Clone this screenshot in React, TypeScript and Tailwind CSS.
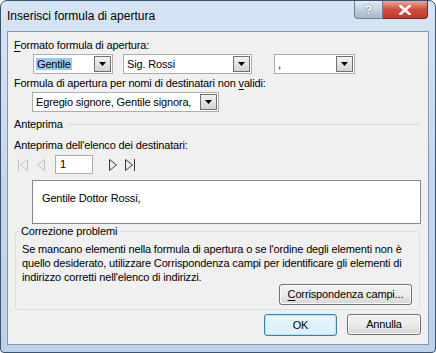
import React from "react";

const font = { fontFamily: '"Liberation Sans", Arial, sans-serif' };

function Arrow() {
  return (
    <svg width="7" height="4" viewBox="0 0 7 4">
      <path d="M0 0 H7 L3.5 4 Z" fill="#000" />
    </svg>
  );
}

function Combo({
  w,
  text,
  selected,
}: {
  w: string;
  text: string;
  selected?: boolean;
}) {
  return (
    <div className={`${w} h-[20px] flex items-center border border-[#abadb3] bg-white pl-[2px] pr-[1px]`}>
      <div className="flex-1 text-[11px] text-black leading-[15px] whitespace-nowrap overflow-hidden">
        {selected ? (
          <span className="bg-[#99c9ef] px-[1px]">{text}</span>
        ) : (
          <span className="px-[1px]">{text}</span>
        )}
      </div>
      <div className="w-[17px] h-[16px] flex items-center justify-center border border-[#707070] bg-gradient-to-b from-[#f2f2f2] to-[#d4d4d4]">
        <Arrow />
      </div>
    </div>
  );
}

function NavIcon({ kind, disabled }: { kind: "first" | "prev" | "next" | "last"; disabled?: boolean }) {
  const c = disabled ? "#b9bec5" : "#3c3c3c";
  return (
    <svg width="12" height="14" viewBox="0 0 12 14">
      {kind === "first" && (
        <>
          <path d="M1.5 1 V13" stroke={c} fill="none" />
          <path d="M10.5 1.5 L3.5 7 L10.5 12.5 Z" stroke={c} fill="none" />
        </>
      )}
      {kind === "prev" && <path d="M9.5 1.5 L2.5 7 L9.5 12.5 Z" stroke={c} fill="none" />}
      {kind === "next" && <path d="M2.5 1.5 L9.5 7 L2.5 12.5 Z" stroke={c} fill="none" />}
      {kind === "last" && (
        <>
          <path d="M1.5 1.5 L8.5 7 L1.5 12.5 Z" stroke={c} fill="none" />
          <path d="M10.5 1 V13" stroke={c} fill="none" />
        </>
      )}
    </svg>
  );
}

function Button({ w, children, focused }: { w: string; children: React.ReactNode; focused?: boolean }) {
  return (
    <div
      className={`${w} flex items-center justify-center rounded-[3px] border text-[11px] text-black ${
        focused
          ? "h-[22px] border-[#3c7fb1] bg-gradient-to-b from-[#eaf6fd] to-[#d9f0fc] shadow-[inset_0_0_0_1px_#b8e2f8]"
          : "h-[21px] border-[#707070] bg-gradient-to-b from-[#f2f2f2] via-[#ebebeb] to-[#d6d6d6] shadow-[inset_0_0_0_1px_#fcfcfc]"
      }`}
    >
      {children}
    </div>
  );
}

export default function App() {
  return (
    <div className="w-[436px] h-[353px] bg-white" style={font}>
      <div className="w-[436px] h-[353px] rounded-t-[7px] rounded-b-[4px] border border-[#3b526e] bg-gradient-to-b from-[#d6e5f5] via-[#c4d7ee] to-[#bcd2eb] flex flex-col">
        {/* title bar */}
        <div className="h-[30px] flex items-start justify-between pl-[6px] pr-[7px]">
          <div className="pt-[7px] text-[12px] leading-[16px] text-black">Inserisci formula di apertura</div>
          <div className="flex">
            <div className="w-[29px] h-[18px] flex items-center justify-center rounded-bl-[4px] border border-t-0 border-[#6f8297] bg-gradient-to-b from-[#e6edf4] via-[#c3d0de] to-[#a8b8ca] text-[12px] font-bold text-white leading-none [text-shadow:0_0_2px_#44546a]">
              ?
            </div>
            <div className="w-[45px] h-[18px] flex items-center justify-center rounded-br-[4px] border border-t-0 border-l-0 border-[#6b2a22] bg-gradient-to-b from-[#e6a89c] via-[#cf4d3a] to-[#c4392a]">
              <svg width="12" height="10" viewBox="0 0 12 10">
                <path d="M1.5 1 L10.5 9 M10.5 1 L1.5 9" stroke="#fff" strokeWidth="2.6" strokeLinecap="square" />
              </svg>
            </div>
          </div>
        </div>

        {/* client area */}
        <div className="mx-[6px] mb-[7px] flex-1 border border-[#8399b3] bg-[#f0f0f0] flex flex-col text-[11px] text-black leading-[15px] tracking-[-0.15px]">
          <div className="pl-[6px] pt-[6px]">
            <span className="underline underline-offset-2">F</span>ormato formula di apertura:
          </div>
          <div className="flex items-center pl-[25px] pt-[1px] gap-[10px]">
            <Combo w="w-[80px]" text="Gentile" selected />
            <Combo w="w-[129px]" text="Sig. Rossi" />
            <div className="w-[2px]" />
            <Combo w="w-[81px]" text="," />
          </div>
          <div className="pl-[6px] pt-[2px]">
            Formula di apertura per nomi di destinatari non <span className="underline underline-offset-2">v</span>alidi:
          </div>
          <div className="pl-[24px] pt-[1px]">
            <Combo w="w-[187px]" text="Egregio signore, Gentile signora," />
          </div>

          <div className="flex items-center pl-[6px] pr-[8px] pt-[5px]">
            <span>Anteprima</span>
            <div className="flex-1 h-px bg-[#d5dfe5] ml-[4px]" />
          </div>
          <div className="pl-[6px] pt-[6px]">Anteprima dell'elenco dei destinatari:</div>
          <div className="flex items-center pl-[9px] pt-[2px]">
            <NavIcon kind="first" disabled />
            <div className="w-[6px]" />
            <NavIcon kind="prev" disabled />
            <div className="ml-[8px] w-[38px] h-[19px] border border-[#abadb3] bg-white flex items-center pl-[4px]">1</div>
            <div className="w-[14px]" />
            <NavIcon kind="next" />
            <div className="w-[5px]" />
            <NavIcon kind="last" />
          </div>
          <div className="ml-[24px] mr-[7px] mt-[6px] h-[44px] border border-[#828790] bg-white pl-[9px] pt-[10px]">
            Gentile Dottor Rossi,
          </div>

          <div className="relative ml-[7px] mr-[8px] mt-[7px] border border-[#d5dfe5] rounded-[3px] pl-[6px] pr-[2px] pt-[10px] pb-[4px]">
            <div className="absolute left-[4px] top-[-8px] bg-[#f0f0f0] px-[1px]">Correzione problemi</div>
            <div className="leading-[14px]">
              Se mancano elementi nella formula di apertura o se l'ordine degli elementi non è quello desiderato, utilizzare Corrispondenza campi per identificare gli elementi di indirizzo corretti nell'elenco di indirizzi.
            </div>
            <div className="flex justify-end pr-[5px]">
              <Button w="w-[133px]">
                <span className="underline underline-offset-2">C</span>orrispondenza campi...
              </Button>
            </div>
          </div>

          <div className="flex justify-end gap-[10px] pr-[7px] pt-[4px]">
            <Button w="w-[73px]" focused>
              OK
            </Button>
            <Button w="w-[74px]">Annulla</Button>
          </div>
        </div>
      </div>
    </div>
  );
}
